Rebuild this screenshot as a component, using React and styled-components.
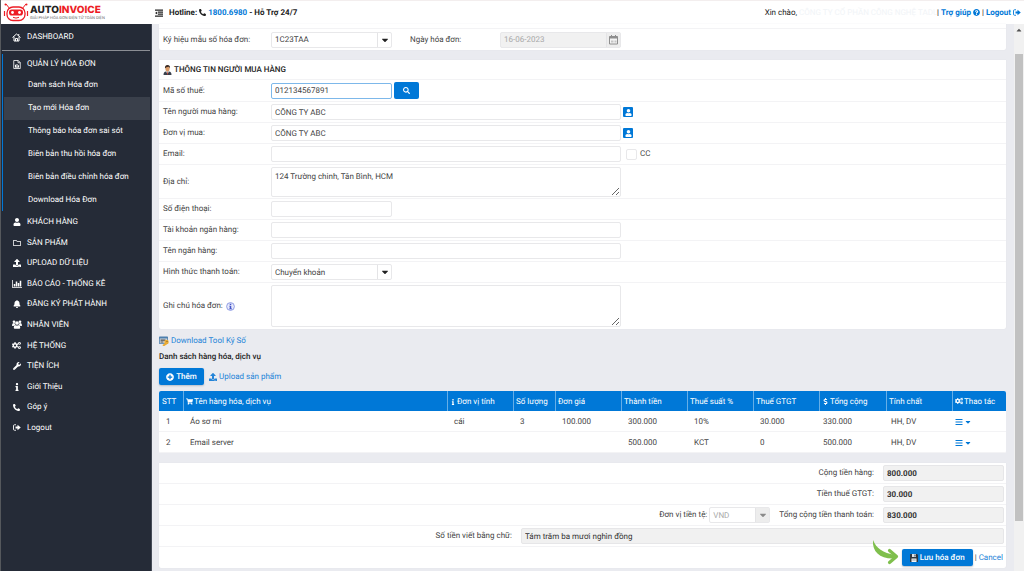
import React from 'react';
import styled, { createGlobalStyle, css } from 'styled-components';
import {
    FaPhoneAlt, FaUser, FaRegFolder, FaUpload, FaBell, FaCogs, FaWrench, FaInfo,
    FaQuestionCircle, FaSearch, FaPlusCircle, FaShoppingCart, FaDollarSign, FaBars, FaCaretDown, FaCaretUp
} from 'react-icons/fa';

const GlobalStyle = createGlobalStyle`
* { box-sizing: border-box; }
body {
    margin: 0;
    background: #eaebf0;
    color: #444444;
    font-family: Roboto, "Liberation Sans", sans-serif;
    font-size: 8px;
    line-height: 12px;
    text-rendering: geometricPrecision;
}
button, input, select, textarea {
    font-family: inherit;
    font-size: 8px;
    color: inherit;
    margin: 0;
    text-rendering: inherit;
}
a { color: #2484d8; text-decoration: none; }
svg { flex: none; }
`;

const Page = styled.div`
display: flex;
flex-direction: column;
min-height: 100vh;
border-left: 1px solid #55585c;
`;
const Header = styled.header`
display: flex;
align-items: center;
height: 24px;
padding: 0 3px 0 2px;
background: #ffffff;
border-top: 1px solid #f3eeee;
color: #222222;
`;
const Logo = styled.a`
display: flex;
align-items: center;
gap: 1px;
width: 152px;
`;
const LogoName = styled.span`
display: block;
font-family: Inter, Roboto, sans-serif;
font-size: 10px;
font-weight: 800;
line-height: 9px;
color: #222222;
b { color: #ed1c24; font-weight: 800; }
`;
const LogoTagline = styled.span`
display: block;
font-size: 4px;
line-height: 5px;
color: #666666;
white-space: nowrap;
`;
const Hotline = styled.div`
display: flex;
align-items: center;
gap: 2px;
font-weight: 700;
a { color: #0078d7; }
svg:first-child { margin-right: 4px; }
`;
const Account = styled.div`
display: flex;
align-items: center;
gap: 2px;
margin-left: auto;
a {
    display: flex;
    align-items: center;
    gap: 2px;
    color: #0078d7;
    font-weight: 700;
}
`;
const Company = styled.span`
color: #f1f4f7;
width: 136px;
white-space: nowrap;
`;
const Body = styled.div`
display: flex;
flex: 1;
`;

const Sidebar = styled.nav`
width: 151px;
flex: none;
background: #252b37;
border-right: 1px solid #454b57;
padding-left: 1px;
`;
const MenuLink = styled.a`
display: flex;
align-items: center;
gap: 6px;
height: ${p => p.$tall ? '26px' : 'auto'};
padding-left: 10px;
color: #ffffff;
span {
    display: flex;
    justify-content: center;
    width: 9px;
}
`;
const Group = styled.div`
margin-top: 3px;
border-left: 1px solid #0078d7;
padding-right: 1px;
`;
const GroupTitle = styled(MenuLink)`
height: 20px;
padding-left: 9px;
`;
const SubMenu = styled.div`
display: grid;
grid-auto-rows: 1fr;
height: 137px;
`;
const SubLink = styled.a`
display: flex;
align-items: center;
margin-left: 1px;
padding-left: 24px;
color: #ffffff;
background: ${p => p.$active ? '#3a404b' : 'transparent'};
`;
const Divider = styled.hr`
margin: 0 1px 0 0;
border: 0;
border-top: 1px solid #8b8e94;
`;
const MenuList = styled.div`
display: grid;
grid-auto-rows: 1fr;
height: 226px;
margin-top: 1px;
`;

const Main = styled.main`
flex: 1;
min-width: 0;
padding: 0 8px 3px 7px;
`;
const Panel = styled.section`
background: #ffffff;
border-radius: 0 0 2px 2px;
margin-bottom: 10px;
box-shadow: 0 0 1px #d5d7dc;
`;
const Row = styled.div`
display: flex;
align-items: center;
height: ${p => p.$h || 21}px;
padding-left: 4px;
border-bottom: 1px solid #f3f3f5;
&:last-child { border-bottom: 0; }
`;
const Strip = styled.div`
height: 5px;
border-bottom: 1px solid #f3f3f5;
`;
const PanelTitle = styled.h2`
display: flex;
align-items: center;
gap: 2px;
margin: 0;
font-size: 8px;
font-weight: 500;
color: #222222;
`;
const Label = styled.label`
display: flex;
align-items: center;
gap: 3px;
width: 108px;
flex: none;
`;
const DateLabel = styled(Label)`
width: 90px;
margin-left: 18px;
`;
const box = css`
border: 1px solid #e8e8ea;
border-radius: 2px;
background: #ffffff;
outline: none;
`;
const Input = styled.input`
${box}
height: 16px;
width: ${p => p.$short ? '121px' : '350px'};
padding: 0 3px;
${p => p.$focused && 'border-color: #7db8ea;'}
`;
const TextArea = styled.textarea`
${box}
display: block;
width: 350px;
height: ${p => p.$h}px;
padding: 3px;
line-height: 11px;
`;
const Combo = styled.div`
${box}
display: flex;
align-items: stretch;
width: ${p => p.$w || 121}px;
height: 16px;
${p => p.$off && 'color: #a8a8a8;'}
${p => p.$gray && 'background: #f1f1f1;'}
select, input {
    flex: 1;
    min-width: 0;
    appearance: none;
    border: 0;
    padding: 0 3px;
    background: transparent;
    color: inherit;
    opacity: 1;
    outline: none;
}
`;
const ComboEnd = styled.span`
display: flex;
align-items: center;
justify-content: center;
width: 14px;
border-left: 1px solid #e4e4e6;
color: ${p => p.$off ? '#8a8a8a' : '#222222'};
background: ${p => p.$off ? '#ededed' : 'transparent'};
`;
const Button = styled.button`
display: flex;
align-items: center;
justify-content: center;
gap: 2px;
height: 17px;
width: ${p => p.$w}px;
padding: 0;
border: 0;
border-radius: 2px;
background: #0078d7;
color: #ffffff;
font-weight: 500;
box-shadow: 0 1px 2px #b5bdc8;
`;
const SearchButton = styled(Button)`
margin-left: 2px;
box-shadow: none;
`;
const Badge = styled.button`
display: flex;
align-items: center;
justify-content: center;
width: 10px;
height: 10px;
margin-left: 2px;
padding: 0;
border: 0;
border-radius: 1px;
background: #0078d7;
color: #ffffff;
`;
const CopyLabel = styled.label`
display: flex;
align-items: center;
gap: 3px;
margin-left: 5px;
input {
    appearance: none;
    width: 11px;
    height: 11px;
    border: 1px solid #e8e8ea;
    border-radius: 2px;
}
`;

const ToolLink = styled.a`
display: flex;
align-items: center;
gap: 2px;
width: max-content;
margin-top: -4px;
`;
const ListTitle = styled.h3`
margin: 4px 0 5px;
font-size: 8px;
font-weight: 500;
color: #222222;
`;
const Actions = styled.div`
display: flex;
align-items: center;
gap: 5px;
margin-bottom: 6px;
a {
    display: flex;
    align-items: center;
    gap: 2px;
}
`;
const Table = styled.table`
width: 100%;
table-layout: fixed;
border-collapse: separate;
border-spacing: 0;
margin-bottom: 10px;
background: #ffffff;
border-radius: 2px;
overflow: hidden;
th {
    height: 20px;
    padding: 1px 2px 0;
    background: #0078d7;
    color: #ffffff;
    font-weight: 400;
    text-align: left;
    white-space: nowrap;
    border-left: 1px solid #66aee7;
}
th:first-child { border-left: 0; padding-left: 3px; }
th svg { vertical-align: -1px; margin-right: 1px; }
td {
    height: 21px;
    padding: 2px 0 0 7px;
    border-bottom: 1px solid #f3f3f5;
}
td:nth-child(9) { padding-left: 4px; }
td:nth-child(10) { padding-left: 5px; }
td:last-child { padding-left: 3px; }
`;
const RowMenu = styled.button`
display: flex;
align-items: center;
gap: 1px;
padding: 0;
border: 0;
background: none;
color: #0078d7;
`;

const SumRow = styled(Row)`
justify-content: flex-end;
gap: 9px;
padding-right: 2px;
`;
const Total = styled.input`
height: 16px;
width: ${p => p.$wide ? '483px' : '121px'};
padding: 0 3px;
border: 1px solid #e6e6e8;
border-radius: 2px;
background: #f1f1f1;
color: #333333;
font-weight: ${p => p.$wide ? 400 : 700};
outline: none;
`;
const Currency = styled.div`
display: flex;
align-items: center;
gap: 2px;
`;
const SaveRow = styled(SumRow)`
gap: 2px;
padding-right: 3px;
`;
const SaveBox = styled.div`
position: relative;
`;
const Pointer = styled.svg`
position: absolute;
right: 74px;
bottom: 1px;
`;

const Scrollbar = styled.div`
display: flex;
flex-direction: column;
align-items: center;
width: 10px;
flex: none;
padding: 2px 0;
background: #f1f1f1;
color: #505050;
`;
const Thumb = styled.div`
width: 8px;
margin: 20px 0 50px;
flex: 1;
background: #c1c1c1;
`;

const RobotIcon = () => (
    <svg width="26" height="19" viewBox="0 0 26 19" fill="none" stroke="#ed1c24">
        <path d="M7 6 3 1M19 6l4-5" strokeWidth="1" />
        <circle cx="2.500" cy="1.500" r="1" fill="#ed1c24" stroke="none" />
        <circle cx="23.500" cy="1.500" r="1" fill="#ed1c24" stroke="none" />
        <path d="M1.500 8v5M24.500 8v5" strokeWidth="1.200" />
        <rect x="4" y="4" width="18" height="13.500" rx="6" strokeWidth="1.300" />
        <rect x="6" y="6.500" width="14" height="6" rx="2.800" fill="#ed1c24" stroke="none" />
        <circle cx="9.500" cy="9.500" r="1.400" fill="#fff" stroke="none" />
        <circle cx="16.500" cy="9.500" r="1.400" fill="#fff" stroke="none" />
        <path d="M10 14.300q3 1.600 6 0" strokeWidth="1" />
    </svg>
);
const DedentIcon = () => (
    <svg width="8" height="8" viewBox="0 0 16 16" fill="currentColor">
        <path d="M0 1h16v2.500H0zM6 5h10v2.500H6zM6 9h10v2.500H6zM0 13h16v2.500H0zM4.500 4.800v6.400L0 8z" />
    </svg>
);
const HomeIcon = () => (
    <svg width="9" height="9" viewBox="0 0 18 18" fill="none" stroke="currentColor" strokeWidth="2">
        <path d="M1 9 9 2l8 7M4 7.500V16h10V7.500M7 16v-5h4v5M13.500 5V2" />
    </svg>
);
const InvoiceIcon = () => (
    <svg width="8" height="9" viewBox="0 0 16 18" fill="none" stroke="currentColor" strokeWidth="1.600">
        <path d="M1.500 1h9l4 4v12h-13zM10 1v4.500h4.500M4 14.500h8" />
        <path d="M5 14V9.500M8 14V8M11 14v-3.500" strokeWidth="2" />
    </svg>
);
const ChartIcon = () => (
    <svg width="10" height="8" viewBox="0 0 20 16" fill="currentColor">
        <path d="M0 0h1.500v14H20v1.500H0zM3.500 8h3v5h-3zM7.500 3h3v10h-3zM11.500 6h3v7h-3zM15.500 1.500h3V13h-3z" />
    </svg>
);
const TeamIcon = () => (
    <svg width="10" height="9" viewBox="0 0 20 18" fill="currentColor">
        <circle cx="4" cy="3.500" r="2.700" />
        <circle cx="16" cy="3.500" r="2.700" />
        <circle cx="10" cy="6" r="3.700" />
        <path d="M0 11q0-5 3-5 1 .8 2.500.5Q5.500 8.500 7 10q-3 0-4 2-3 0-3-1zM20 11q0-5-3-5-1 .8-2.500.5.500 2-1.500 3.500 3 0 4 2 3 0 3-1zM3.500 15q0-5 3-5 3.500 2 7 0 3 0 3 5 0 2.500-2 2.500h-9q-2 0-2-2.500z" />
    </svg>
);
const LogoutIcon = () => (
    <svg width="8" height="7" viewBox="0 0 16 14">
        <path d="M6 1.500H3Q1 1.500 1 3.500v7q0 2 2 2h3" fill="none" stroke="currentColor" strokeWidth="1.800" />
        <path d="M5 5h4V1.500L15.500 7 9 12.500V9H5z" fill="currentColor" />
    </svg>
);
const BuyerIcon = () => (
    <svg width="9" height="10" viewBox="0 0 18 20">
        <path d="M1 20q0-7 5-7h6q5 0 5 7z" fill="#39404c" />
        <path d="m6 13 3 5 3-5z" fill="#f4f4f4" />
        <path d="m8.500 14-.5 5h2l-.5-5z" fill="#c0392b" />
        <ellipse cx="9" cy="7.500" rx="4.200" ry="5.500" fill="#d99a66" />
        <path d="M4 7Q3 0 9 0t5 7q-1-3-3-3.500Q6 4 4 7z" fill="#3c2a20" />
    </svg>
);
const CalendarIcon = () => (
    <svg width="9" height="10" viewBox="0 0 18 20">
        <path d="M1 3h16v15H1z" fill="#f4f4f4" stroke="#8e8e8e" strokeWidth="2" />
        <path d="M1 3h16v4H1zM4 0h2v4H4zM12 0h2v4h-2z" fill="#8e8e8e" />
        <path d="M4 11h5v4H4zM11 11h4v4h-4z" fill="#c4c4c4" />
    </svg>
);
const HelpIcon = () => (
    <svg width="9" height="9" viewBox="0 0 18 18">
        <circle cx="9" cy="9" r="7.800" fill="#e6e9fb" stroke="#7c8be0" strokeWidth="1.600" />
        <path d="M7.500 3.500h3v2.500h-3zM6.500 7.500h4V13h1.500v1.500H6.500V13h1V9h-1z" fill="#4455c7" />
    </svg>
);
const ToolIcon = () => (
    <svg width="10" height="10" viewBox="0 0 20 20">
        <rect x="0" y="1" width="18" height="15" rx="1.500" fill="#4c7fae" />
        <path d="M1.500 5h15v9.500h-15z" fill="#d6dde3" />
        <path d="M3 7h10v2.500H3zM3 11h6v2H3z" fill="#4a4a4a" />
        <circle cx="15" cy="12" r="4.500" fill="#e9ab35" />
        <path d="m12 14-5 4 1 2h3l7-5z" fill="#e9ab35" />
        <circle cx="16" cy="11" r="1.200" fill="#7a5a1c" />
    </svg>
);
const FloppyIcon = () => (
    <svg width="8" height="8" viewBox="0 0 16 16">
        <path d="M0 1q0-1 1-1h13l2 2v14H0z" fill="#2d3640" />
        <path d="M4 0h8v6H4z" fill="#dfe4e8" />
        <path d="M9 1h2v4H9z" fill="#2d3640" />
        <path d="M3 9h10v7H3z" fill="#f5f5f5" />
        <path d="M4.500 11h7v1h-7zM4.500 13h7v1h-7z" fill="#9aa2a9" />
    </svg>
);

const subMenu = ['Danh sách Hóa đơn', 'Tạo mới Hóa đơn', 'Thông báo hóa đơn sai sót', 'Biên bản thu hồi hóa đơn', 'Biên bản điều chỉnh hóa đơn', 'Download Hóa Đơn'];

const menu = [
    [<FaUser />, 'KHÁCH HÀNG'],
    [<FaRegFolder />, 'SẢN PHẨM'],
    [<FaUpload />, 'UPLOAD DỮ LIỆU'],
    [<ChartIcon />, 'BÁO CÁO - THỐNG KÊ'],
    [<FaBell />, 'ĐĂNG KÝ PHÁT HÀNH'],
    [<TeamIcon />, 'NHÂN VIÊN'],
    [<FaCogs size={9} />, 'HỆ THỐNG'],
    [<FaWrench />, 'TIỆN ÍCH'],
    [<FaInfo />, 'Giới Thiệu'],
    [<FaPhoneAlt size={7} />, 'Góp ý'],
    [<LogoutIcon />, 'Logout'],
];

const columns = [
    [24, 'STT'],
    [null, 'Tên hàng hóa, dịch vụ', <FaShoppingCart size={7} />],
    [66, 'Đơn vị tính', <FaInfo size={6} />],
    [42, 'Số lượng'],
    [66, 'Đơn giá'],
    [66, 'Thành tiền'],
    [66, 'Thuế suất %'],
    [66, 'Thuế GTGT'],
    [67, 'Tổng cộng', <FaDollarSign size={7} />],
    [66, 'Tính chất'],
    [54, 'Thao tác', <FaCogs size={8} />],
];

const items = [
    ['1', 'Áo sơ mi', 'cái', '3', '100.000', '300.000', '10%', '30.000', '330.000', 'HH, DV'],
    ['2', 'Email server', '', '', '', '500.000', 'KCT', '0', '500.000', 'HH, DV'],
];

const TopBar = () => (
    <Header>
        <Logo href="#">
            <RobotIcon />
            <span>
                <LogoName>AUTO<b>INVOICE</b></LogoName>
                <LogoTagline>GIẢI PHÁP HÓA ĐƠN ĐIỆN TỬ TOÀN DIỆN</LogoTagline>
            </span>
        </Logo>
        <Hotline>
            <DedentIcon />
            <span>Hotline:</span>
            <FaPhoneAlt size={7} />
            <a href="tel:18006980">1800.6980</a>
            <span>- Hỗ Trợ 24/7</span>
        </Hotline>
        <Account>
            <span>Xin chào,</span>
            <Company>CÔNG TY CỔ PHẦN CÔNG NGHỆ TADU</Company>
            <span>|</span>
            <a href="#help">Trợ giúp <FaQuestionCircle size={7} /></a>
            <span>|</span>
            <a href="#logout">Logout <LogoutIcon /></a>
        </Account>
    </Header>
);

const SideMenu = () => (
    <Sidebar>
        <MenuLink href="#" $tall><span><HomeIcon /></span>DASHBOARD</MenuLink>
        <Divider />
        <Group>
            <GroupTitle href="#"><span><InvoiceIcon /></span>QUẢN LÝ HÓA ĐƠN</GroupTitle>
            <SubMenu>
                {subMenu.map((name, i) => <SubLink href="#" key={name} $active={i === 1}>{name}</SubLink>)}
            </SubMenu>
        </Group>
        <MenuList>
            {menu.map(([icon, name]) => <MenuLink href="#" key={name}><span>{icon}</span>{name}</MenuLink>)}
        </MenuList>
    </Sidebar>
);

const BuyerForm = () => (
    <Panel>
        <Row $h={20}>
            <PanelTitle><BuyerIcon />THÔNG TIN NGƯỜI MUA HÀNG</PanelTitle>
        </Row>
        <Row $h={22}>
            <Label htmlFor="tax">Mã số thuế:</Label>
            <Input id="tax" $short $focused defaultValue="012134567891" />
            <SearchButton $w={25} aria-label="Tìm"><FaSearch size={7} /></SearchButton>
        </Row>
        <Row>
            <Label htmlFor="buyer">Tên người mua hàng:</Label>
            <Input id="buyer" defaultValue="CÔNG TY ABC" />
            <Badge aria-label="Chọn người mua"><FaUser size={7} /></Badge>
        </Row>
        <Row>
            <Label htmlFor="unit">Đơn vị mua:</Label>
            <Input id="unit" defaultValue="CÔNG TY ABC" />
            <Badge aria-label="Chọn đơn vị"><FaUser size={7} /></Badge>
        </Row>
        <Row>
            <Label htmlFor="email">Email:</Label>
            <Input id="email" />
            <CopyLabel><input type="checkbox" />CC</CopyLabel>
        </Row>
        <Row $h={34}>
            <Label htmlFor="address">Địa chỉ:</Label>
            <TextArea id="address" $h={30} defaultValue="124 Trường chinh, Tân Bình, HCM" />
        </Row>
        <Row>
            <Label htmlFor="phone">Số điện thoại:</Label>
            <Input id="phone" $short />
        </Row>
        <Row>
            <Label htmlFor="account">Tài khoản ngân hàng:</Label>
            <Input id="account" />
        </Row>
        <Row>
            <Label htmlFor="bank">Tên ngân hàng:</Label>
            <Input id="bank" />
        </Row>
        <Row>
            <Label htmlFor="payment">Hình thức thanh toán:</Label>
            <Combo>
                <select id="payment"><option>Chuyển khoản</option></select>
                <ComboEnd><FaCaretDown size={10} /></ComboEnd>
            </Combo>
        </Row>
        <Row $h={46}>
            <Label htmlFor="note">Ghi chú hóa đơn: <HelpIcon /></Label>
            <TextArea id="note" $h={42} />
        </Row>
    </Panel>
);

const ItemTable = () => (
    <Table>
        <colgroup>
            {columns.map(([width, name]) => <col key={name} width={width || undefined} />)}
        </colgroup>
        <thead>
            <tr>{columns.map(([, name, icon]) => <th key={name}>{icon}{name}</th>)}</tr>
        </thead>
        <tbody>
            {items.map(item => (
                <tr key={item[0]}>
                    {item.map((value, i) => <td key={i}>{value}</td>)}
                    <td><RowMenu aria-label="Thao tác"><FaBars size={8} /><FaCaretDown size={8} /></RowMenu></td>
                </tr>
            ))}
        </tbody>
    </Table>
);

const Summary = () => (
    <Panel>
        <SumRow>
            <label htmlFor="subtotal">Cộng tiền hàng:</label>
            <Total id="subtotal" readOnly value="800.000" />
        </SumRow>
        <SumRow>
            <label htmlFor="vat">Tiền thuế GTGT:</label>
            <Total id="vat" readOnly value="30.000" />
        </SumRow>
        <SumRow>
            <Currency>
                <label htmlFor="currency">Đơn vị tiền tệ:</label>
                <Combo $w={61} $off>
                    <select id="currency" disabled><option>VND</option></select>
                    <ComboEnd $off><FaCaretDown size={10} /></ComboEnd>
                </Combo>
            </Currency>
            <label htmlFor="total">Tổng cộng tiền thanh toán:</label>
            <Total id="total" readOnly value="830.000" />
        </SumRow>
        <SumRow>
            <label htmlFor="words">Số tiền viết bằng chữ:</label>
            <Total id="words" $wide readOnly value="Tám trăm ba mươi nghìn đồng" />
        </SumRow>
        <SaveRow>
            <SaveBox>
                <Pointer width="27" height="25" viewBox="0 0 27 25">
                    <path d="M1 0C4 8 11 13 23 15l-1 3.500C8 19 0 12 1 0z" fill="#7fbf4d" />
                    <path d="m17.500 10.500 7 6-7 6" fill="none" stroke="#7fbf4d" strokeWidth="3.200" strokeLinecap="round" strokeLinejoin="round" />
                </Pointer>
                <Button $w={71}><FloppyIcon />Lưu hóa đơn</Button>
            </SaveBox>
            <span>|</span>
            <a href="#cancel">Cancel</a>
        </SaveRow>
    </Panel>
);

const App = () => (
    <>
        <GlobalStyle />
        <Page>
            <TopBar />
            <Body>
                <SideMenu />
                <Main>
                    <Panel>
                        <Strip />
                        <Row>
                            <Label htmlFor="symbol">Ký hiệu mẫu số hóa đơn:</Label>
                            <Combo>
                                <select id="symbol"><option>1C23TAA</option></select>
                                <ComboEnd><FaCaretDown size={10} /></ComboEnd>
                            </Combo>
                            <DateLabel htmlFor="date">Ngày hóa đơn:</DateLabel>
                            <Combo $off $gray>
                                <input id="date" disabled defaultValue="16-06-2023" />
                                <ComboEnd $off><CalendarIcon /></ComboEnd>
                            </Combo>
                        </Row>
                    </Panel>
                    <BuyerForm />
                    <ToolLink href="#tool"><ToolIcon />Download Tool Ký Số</ToolLink>
                    <ListTitle>Danh sách hàng hóa, dịch vụ</ListTitle>
                    <Actions>
                        <Button $w={45}><FaPlusCircle size={8} />Thêm</Button>
                        <a href="#upload"><FaUpload size={8} />Upload sản phẩm</a>
                    </Actions>
                    <ItemTable />
                    <Summary />
                </Main>
                <Scrollbar>
                    <FaCaretUp size={8} />
                    <Thumb />
                    <FaCaretDown size={8} />
                </Scrollbar>
            </Body>
        </Page>
    </>
);

export default App;
